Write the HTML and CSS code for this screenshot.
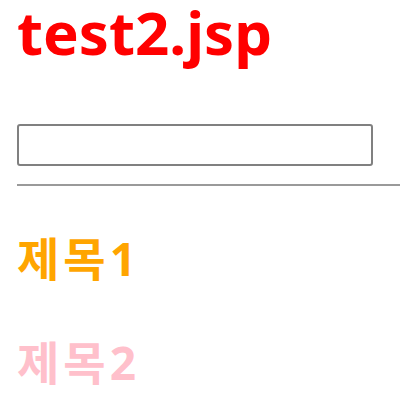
FILE: index.html
```html
<!DOCTYPE html>
<html lang="ko">
<head>
  <meta charset="UTF-8">
  <meta name="viewport" content="width=device-width, initial-scale=1.0">
  <title>test2.jsp</title>
  <link rel="stylesheet" href="styles.css">
</head>
<body>

  <h1 class="page-title">test2.jsp</h1>

  <input type="text" class="search-box">

  <hr class="divider">

  <h2 class="sub-title sub-title-first">제목1</h2>
  <h2 class="sub-title sub-title-second">제목2</h2>

</body>
</html>
```

FILE: styles.css
```css
body {
  margin: 0;
  padding: 0 0 0 17px;
  font-family: "Noto Sans", "Noto Sans CJK KR", sans-serif;
  background-color: #ffffff;
}

.page-title {
  margin: 0;
  font-size: 60px;
  line-height: 64px;
  font-weight: bold;
  color: #ff0000;
}

/* search input */
.search-box {
  display: block;
  margin: 60px 0 0;
  width: 356px;
  height: 42px;
  box-sizing: border-box;
  border: 2px solid #808080;
  border-radius: 3px;
  background-color: #ffffff;
}

.divider {
  margin: 18px 0 0;
  border: none;
  border-top: 2px solid #9a9a9a;
}

.sub-title {
  margin: 45px 0 0;
  font-size: 46px;
  line-height: 54px;
  font-weight: bold;
  letter-spacing: 4px;
}

.sub-title-first {
  color: #ffa500;
}

.sub-title-second {
  margin-top: 50px;
  color: #ffc0cb;
}
```
